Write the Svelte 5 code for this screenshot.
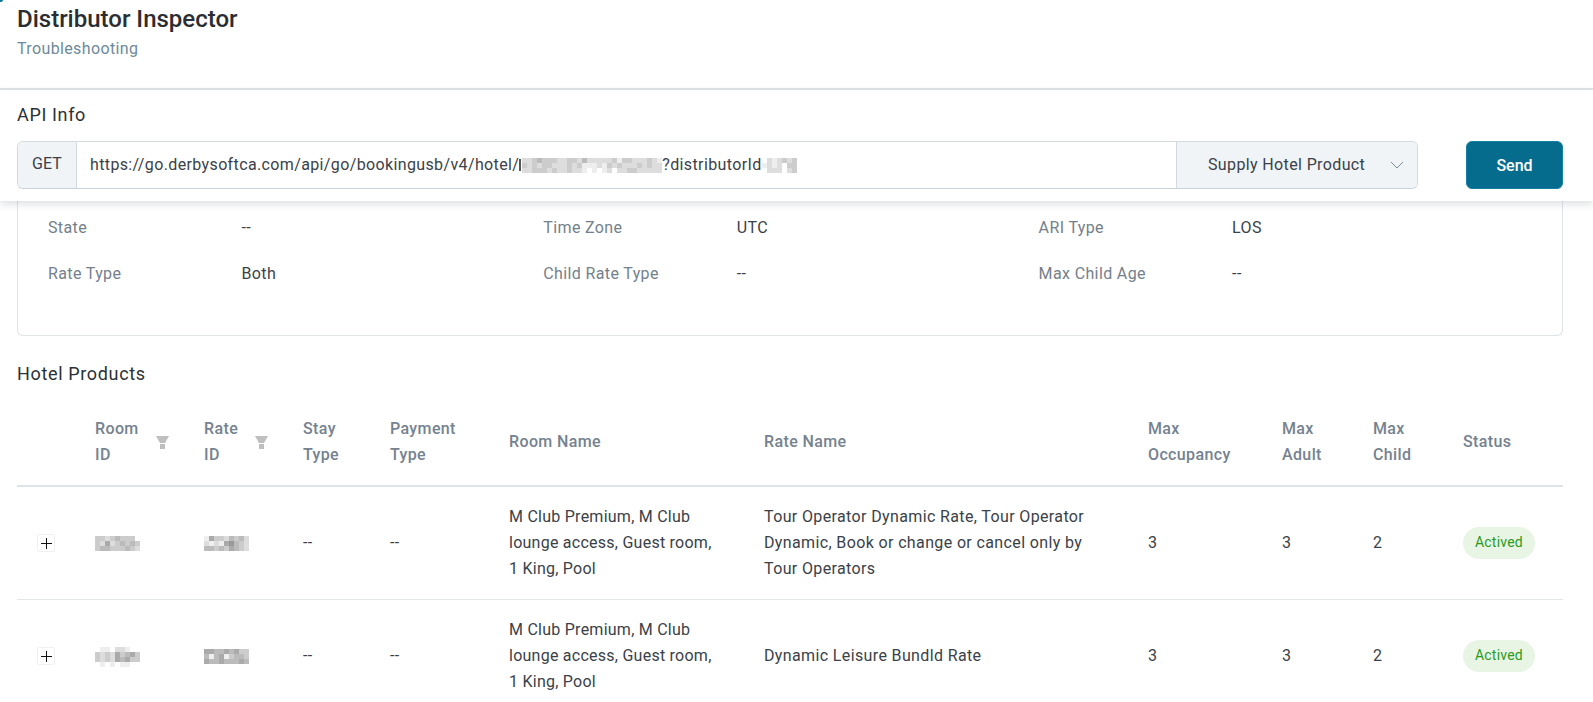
<script>
  const details = [
    ['State', '--'], ['Time Zone', 'UTC'], ['ARI Type', 'LOS'],
    ['Rate Type', 'Both'], ['Child Rate Type', '--'], ['Max Child Age', '--']
  ]

  const heads = [
    { lines: ['Room', 'ID'], filter: true },
    { lines: ['Rate', 'ID'], filter: true },
    { lines: ['Stay', 'Type'] },
    { lines: ['Payment', 'Type'] },
    { lines: ['Room Name'] },
    { lines: ['Rate Name'] },
    { lines: ['Max', 'Occupancy'] },
    { lines: ['Max', 'Adult'] },
    { lines: ['Max', 'Child'] },
    { lines: ['Status'] }
  ]

  const roomName = 'M Club Premium, M Club lounge access, Guest room, 1 King, Pool'

  // blurred ids, one hex digit per mosaic cell
  const rows = [
    {
      room: ['ccdcbcccf', 'cdadcbcbc', 'cbbcccbcd'],
      rate: ['eaccdbcbd', 'dedea9bcd', 'bbcbcabcd'],
      name: 'Tour Operator Dynamic Rate, Tour Operator Dynamic, Book or change or cancel only by Tour Operators'
    },
    {
      room: ['feefddeff', 'cdcdacbac', 'cdcdabacc', 'fefefeeff'],
      rate: ['aabbabacc', 'bebaecbbc', 'abbabbbab'],
      name: 'Dynamic Leisure Bundld Rate'
    }
  ]

  const urlBlur = [
    'ddcbcccddccdbdddddceccdddcde',
    'cdcdccdddcdceeedecdcdddcdcdd',
    'ddcccdcddcddefefedfddccddddd'
  ]
  const idBlur = ['fdedcdc', 'ededfcc', 'fdddfdc']

  const gray = (c) => '#' + c + c + c + c + c + c
</script>

{#snippet mosaic(cells)}
  <span class="mosaic">
    {#each cells as line}
      <span class="mosaic-row">
        {#each line.split('') as c}
          <i style="background:{gray(c)}"></i>
        {/each}
      </span>
    {/each}
  </span>
{/snippet}

<div class="page">
  <span class="corner"></span>

  <header class="head">
    <h1>Distributor Inspector</h1>
    <p>Troubleshooting</p>
  </header>

  <section class="api">
    <h2>API Info</h2>
    <div class="api-row">
      <div class="group">
        <span class="method">GET</span>
        <div class="url">
          <span>https://go.derbysoftca.com/api/go/bookingusb/v4/hotel/</span><b class="sliver"></b>{@render mosaic(urlBlur)}<span>?distributorId</span>{@render mosaic(idBlur)}
        </div>
        <div class="select">
          <span>Supply Hotel Product</span>
          <svg width="14" height="8" viewBox="0 0 14 8" fill="none">
            <path d="M1 1l6 6 6-6" stroke="#7b8a97" stroke-width="1" />
          </svg>
        </div>
      </div>
      <button class="send">Send</button>
    </div>
  </section>

  <main class="content">
    <div class="card">
      {#each details as [label, value]}
        <span class="label">{label}</span>
        <span class="value">{value}</span>
      {/each}
    </div>

    <h2 class="products">Hotel Products</h2>

    <table>
      <colgroup>
        <col style="width:62px" /><col style="width:109px" /><col style="width:99px" />
        <col style="width:87px" /><col style="width:119px" /><col style="width:255px" />
        <col style="width:384px" /><col style="width:134px" /><col style="width:91px" />
        <col style="width:90px" /><col style="width:116px" />
      </colgroup>
      <thead>
        <tr>
          <th></th>
          {#each heads as h}
            <th>
              <div class="th-inner">
                <span>
                  {#each h.lines as line}
                    <span class="th-line">{line}</span>
                  {/each}
                </span>
                {#if h.filter}
                  <svg class="funnel" width="13" height="13" viewBox="0 0 13 13">
                    <path d="M0 0h13L9 7H4z M4 8h5v5H4z" fill="#bfbfbf" />
                  </svg>
                {/if}
              </div>
            </th>
          {/each}
        </tr>
      </thead>
      <tbody>
        {#each rows as row}
          <tr>
            <td class="expand">
              <button aria-label="Expand row">
                <svg width="16" height="16" viewBox="0 0 16 16">
                  <path d="M3 8.500h11M8.500 3v11" stroke="#111" stroke-width="1" fill="none" />
                </svg>
              </button>
            </td>
            <td>{@render mosaic(row.room)}</td>
            <td>{@render mosaic(row.rate)}</td>
            <td>--</td>
            <td>--</td>
            <td class="room-name">{roomName}</td>
            <td>{row.name}</td>
            <td>3</td>
            <td>3</td>
            <td>2</td>
            <td><span class="pill">Actived</span></td>
          </tr>
        {/each}
      </tbody>
    </table>
  </main>
</div>

<style>
  :global(body) {
    margin: 0;
    background: #fff;
  }

  .page {
    position: relative;
    height: 100vh;
    overflow: hidden;
    font-family: Roboto, "Liberation Sans", sans-serif;
    font-size: 16px;
    line-height: 26px;
    letter-spacing: 0.37px;
    color: #3a4148;
  }

  .corner {
    position: absolute;
    left: 0;
    top: 0;
    width: 3px;
    height: 2px;
    background: #0a7a9c;
    border-bottom-right-radius: 3px;
  }

  .head {
    height: 88px;
    padding: 0 17px;
    border-bottom: 2px solid #dfe4e8;
  }

  h1 {
    margin: 0;
    padding-top: 5px;
    font-size: 24px;
    line-height: 28px;
    font-weight: 500;
    letter-spacing: 0;
    color: #2a2e33;
  }

  .head p {
    margin: 3px 0 0;
    color: #6d8a9c;
  }

  .api {
    position: relative;
    z-index: 1;
    height: 111px;
    box-sizing: border-box;
    padding: 12px 30px 0 17px;
    background: #fff;
    box-shadow: 0 3px 8px rgba(40, 55, 70, 0.16);
  }

  h2 {
    margin: 0;
    font-size: 18px;
    line-height: 26px;
    font-weight: 400;
    letter-spacing: 0.65px;
    color: #2b3036;
  }

  .api-row {
    display: flex;
    justify-content: space-between;
    margin-top: 13px;
  }

  .group {
    display: flex;
    width: 1401px;
    height: 48px;
    box-sizing: border-box;
    border: 1px solid #d3d9de;
    border-bottom-color: #c9d2da;
    border-radius: 6px;
    overflow: hidden;
  }

  .method {
    width: 59px;
    box-sizing: border-box;
    padding-left: 14px;
    background: #f1f4f7;
    border-right: 1px solid #d3d9de;
    line-height: 44px;
    letter-spacing: 0;
  }

  .url {
    flex: 1;
    display: flex;
    align-items: center;
    padding-left: 13px;
    white-space: nowrap;
  }

  .sliver {
    width: 2px;
    height: 12px;
    margin-right: 1px;
    background: #555;
  }

  .select {
    display: flex;
    align-items: center;
    width: 241px;
    box-sizing: border-box;
    padding-left: 31px;
    gap: 25px;
    background: #f1f4f7;
    border-left: 1px solid #d3d9de;
  }

  .send {
    width: 97px;
    height: 48px;
    border: 1px solid #1580a5;
    border-radius: 6px;
    background: #066c8e;
    color: #fff;
    font: 500 16px Roboto, sans-serif;
  }

  .mosaic {
    display: inline-flex;
    flex-direction: column;
    vertical-align: middle;
  }

  .mosaic-row {
    display: flex;
  }

  .mosaic i {
    display: block;
    width: 5px;
    height: 5px;
  }

  .content {
    padding: 0 30px 0 17px;
  }

  .card {
    display: grid;
    grid-template-columns: repeat(3, 193.500px 301.800px);
    row-gap: 20px;
    padding: 14px 30px 48px;
    border: 1px solid #dfe4e8;
    border-top: none;
    border-radius: 0 0 6px 6px;
  }

  .label {
    color: #74808c;
  }

  .products {
    margin-top: 25px;
  }

  table {
    width: 1546px;
    margin-top: 10px;
    border-collapse: collapse;
    table-layout: fixed;
  }

  th {
    padding: 19px 16px 17px;
    text-align: left;
    font-weight: 500;
    color: #75828f;
    border-bottom: 2px solid #dfe4e8;
  }

  .th-inner {
    display: flex;
    align-items: center;
    justify-content: space-between;
  }

  .th-line {
    display: block;
  }

  .funnel {
    margin-right: 3px;
  }

  td {
    padding: 17px 16px;
    border-bottom: 1px solid #e4e7ea;
    overflow-wrap: break-word;
  }

  td.room-name {
    padding-right: 32px;
    letter-spacing: 0.25px;
  }

  .expand button {
    display: block;
    width: 18px;
    height: 18px;
    margin-left: 4px;
    padding: 0;
    border: 1px solid #f0f0f0;
    border-radius: 2px;
    background: #fff;
    line-height: 0;
  }

  .pill {
    display: inline-block;
    padding: 0 12px;
    height: 32px;
    line-height: 30px;
    border-radius: 16px;
    background: #e8f5e4;
    color: #2a9a1c;
    font-size: 14px;
    letter-spacing: 0.2px;
    vertical-align: middle;
  }
</style>
